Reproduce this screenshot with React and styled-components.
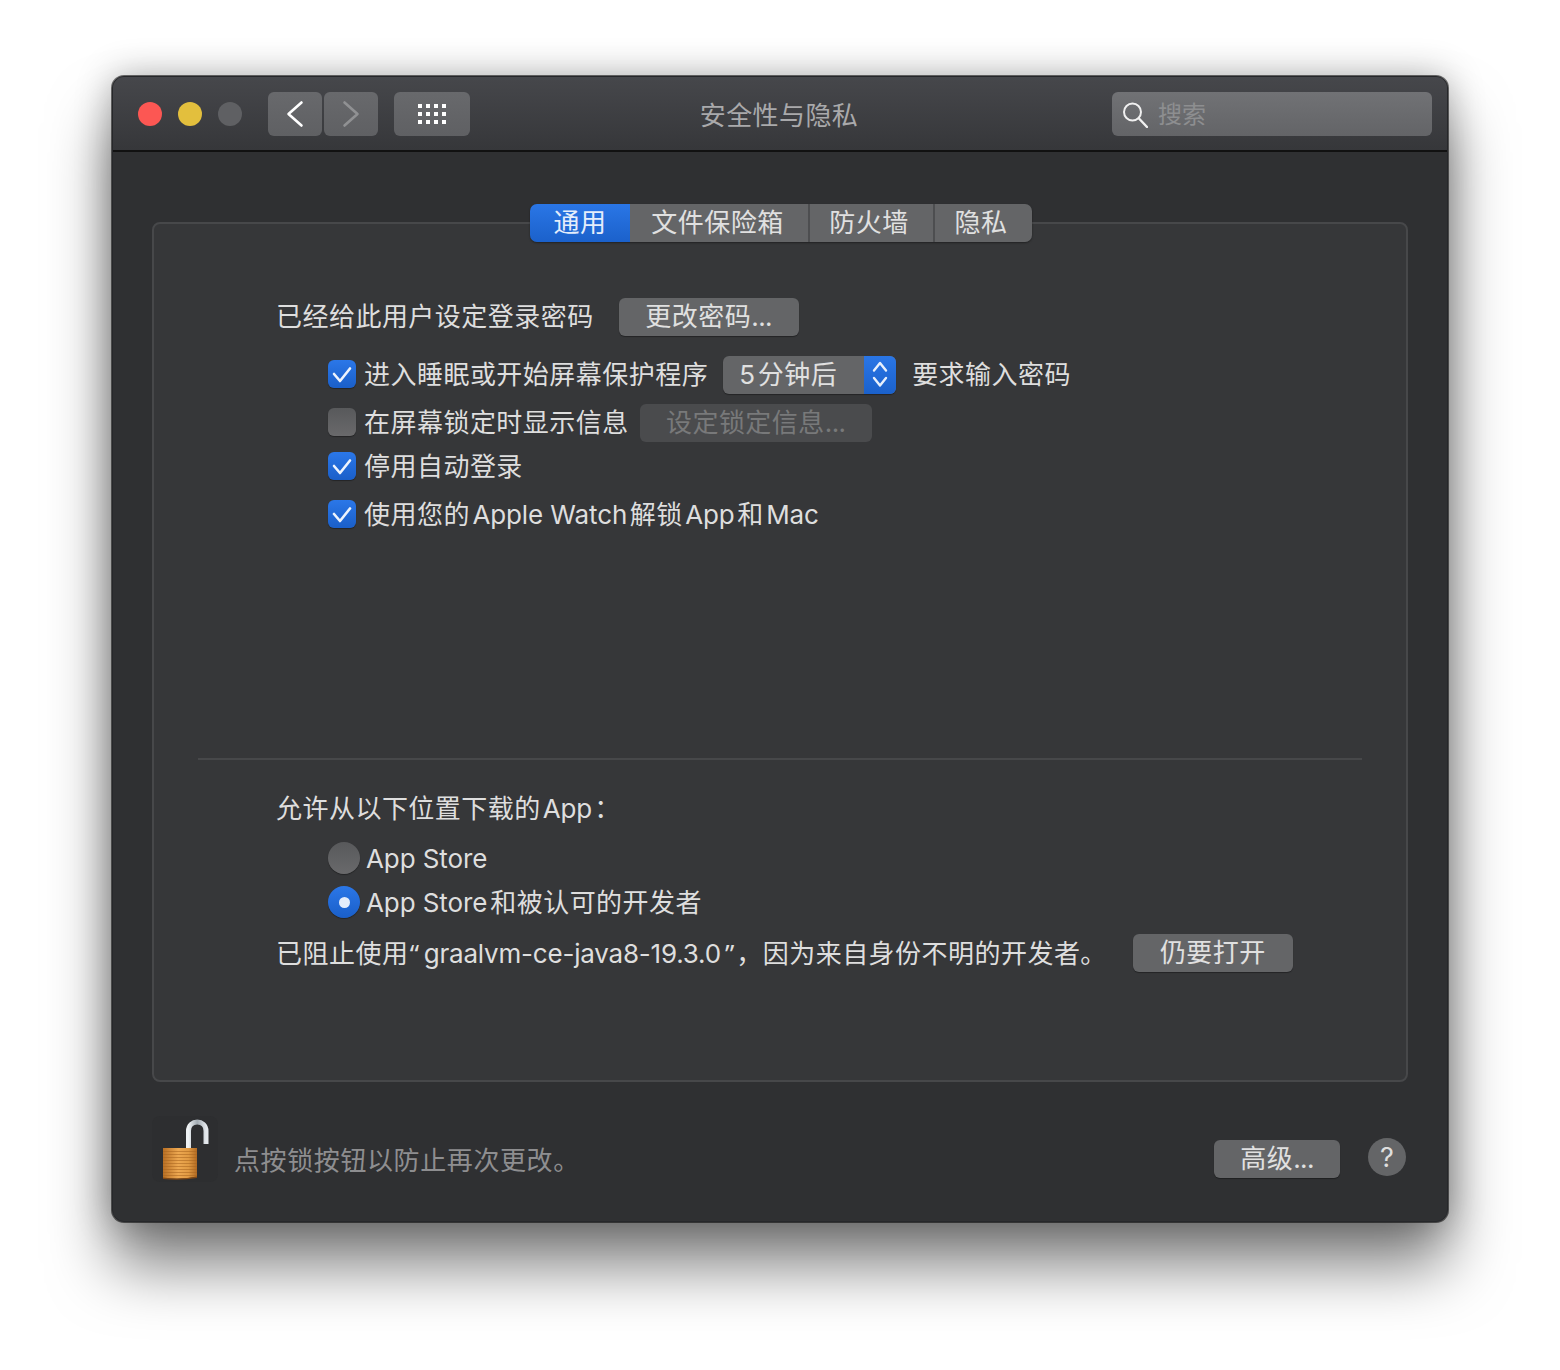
import styled, { createGlobalStyle } from "styled-components";

const GlobalStyle = createGlobalStyle`
  * { box-sizing: border-box; }
  body {
    margin: 0;
    background: #fff;
    font-family: "Inter", "Noto Sans CJK SC", sans-serif;
    font-size: 26px;
    color: #dedede;
  }
`;

const Page = styled.div`
  width: 1560px;
  height: 1370px;
  padding: 76px 112px 0;
  overflow: hidden;
`;

const Window = styled.div`
  width: 1336px;
  height: 1146px;
  border: 1px solid #26272a;
  border-radius: 12px;
  background: #2f3032;
  box-shadow: 0 0 0 1px rgba(0, 0, 0, 0.55), 0 44px 62px rgba(0, 0, 0, 0.5), 0 0 36px rgba(0, 0, 0, 0.3);
  overflow: hidden;
`;

const TitleBar = styled.div`
  display: grid;
  grid-template-columns: 1fr auto 1fr;
  align-items: center;
  height: 75px;
  padding: 0 15px;
  background: linear-gradient(#46474b, #36373a);
  border-bottom: 2px solid #111;
`;

const TitleLeft = styled.div`
  display: flex;
  align-items: center;
  padding-left: 10px;
`;

const Light = styled.span`
  width: 24px;
  height: 24px;
  border-radius: 50%;
  margin-right: 16px;
  background: ${(props) => props.$color};
`;

const NavButton = styled.div`
  display: flex;
  align-items: center;
  justify-content: center;
  width: ${(props) => props.$width}px;
  height: 44px;
  margin-left: ${(props) => props.$left}px;
  border-radius: 6px;
  background: linear-gradient(#68696c, #5f6063);
`;

const Title = styled.div`
  padding-right: 2px;
  color: #a9a9ab;
  letter-spacing: 0.4px;
`;

const SearchBox = styled.div`
  display: flex;
  align-items: center;
  justify-self: end;
  width: 320px;
  height: 44px;
  padding-left: 10px;
  gap: 10px;
  border-radius: 6px;
  background: linear-gradient(#717275, #636467);
  color: #8d8e90;
  font-size: 24px;
`;

const SearchText = styled.span`
  padding-bottom: 3px;
`;

const Content = styled.div`
  padding: 70px 39px 0;
`;

const Panel = styled.div`
  height: 860px;
  border: 2px solid #47484a;
  border-radius: 8px;
  background: #363739;
`;

const Tabs = styled.div`
  display: flex;
  width: 502px;
  height: 38px;
  margin: -20px 0 0 376px;
  border-radius: 7px;
  overflow: hidden;
  box-shadow: 0 1px 2px rgba(0, 0, 0, 0.4);
`;

const Tab = styled.div`
  display: flex;
  align-items: center;
  justify-content: center;
  width: ${(props) => props.$width}px;
  padding: 0 ${(props) => (props.$active ? 0 : 3)}px 5px 0;
  background: ${(props) =>
    props.$active ? "linear-gradient(#2a76e6, #1b61cb)" : "#646567"};
  color: ${(props) => (props.$active ? "#e4edfb" : "#e0e0e0")};
  box-shadow: ${(props) => (props.$divider ? "inset 2px 0 0 #4d4e50" : "none")};
  letter-spacing: 0.47px;
`;

const Row = styled.div`
  display: flex;
  align-items: center;
  height: 38px;
  margin-top: ${(props) => props.$top}px;
  margin-left: ${(props) => (props.$indent ? 174 : 122)}px;
  line-height: 30px;
  letter-spacing: 0.47px;
`;

// latin runs sit tighter than the cjk text around them
const Latin = styled.span`
  margin: 0 ${(props) => props.$gap ?? 2.5}px;
  letter-spacing: ${(props) => props.$track ?? -0.1}px;
`;

const Quote = styled.span`
  font-family: "Noto Sans", sans-serif;
  margin: 0 1.5px;
`;

const Dots = styled.span`
  letter-spacing: -0.6px;
`;

const Box = styled.span`
  display: flex;
  align-items: center;
  justify-content: center;
  width: 28px;
  height: 28px;
  margin: 0 8px 2px 0;
  border-radius: 6px;
  background: ${(props) =>
    props.$checked ? "linear-gradient(#2b77e8, #1a5fc9)" : "linear-gradient(#58595b, #69696b)"};
  box-shadow: 0 1px 1px rgba(0, 0, 0, 0.35);
`;

const Radio = styled.span`
  display: flex;
  align-items: center;
  justify-content: center;
  width: 32px;
  height: 32px;
  margin: 0 6px 2px 0;
  border-radius: 50%;
  background: ${(props) =>
    props.$checked ? "linear-gradient(#2b77e8, #1a5fc9)" : "linear-gradient(#58595b, #69696b)"};
  box-shadow: 0 1px 1px rgba(0, 0, 0, 0.35);
`;

const RadioDot = styled.span`
  width: 11px;
  height: 11px;
  border-radius: 50%;
  background: #e4edfb;
`;

const Button = styled.div`
  display: flex;
  align-items: center;
  justify-content: center;
  width: ${(props) => props.$width}px;
  height: 38px;
  margin-left: ${(props) => props.$left || 0}px;
  border-radius: 6px;
  background: ${(props) => (props.$disabled ? "#4a4b4d" : "#646567")};
  color: ${(props) => (props.$disabled ? "#78797a" : "#e0e0e0")};
  box-shadow: ${(props) => (props.$disabled ? "none" : "0 1px 1px rgba(0, 0, 0, 0.35)")};
  line-height: 30px;
  letter-spacing: 0.47px;
`;

const Select = styled.div`
  display: flex;
  width: 173px;
  height: 38px;
  margin: 0 16px 0 15px;
  border-radius: 6px;
  overflow: hidden;
  background: #646567;
  box-shadow: 0 1px 1px rgba(0, 0, 0, 0.35);
`;

const SelectValue = styled.div`
  flex: 1;
  display: flex;
  align-items: center;
  padding-left: 13px;
  color: #e0e0e0;
`;

const SelectArrows = styled.div`
  display: flex;
  align-items: center;
  justify-content: center;
  width: 32px;
  background: linear-gradient(#2a76e6, #1b61cb);
`;

const Divider = styled.div`
  height: 2px;
  margin: 224px 44px 0;
  background: #47484a;
`;

const Footer = styled.div`
  display: flex;
  align-items: flex-start;
  padding: 34px 2px 0 0;
`;

const LockBox = styled.div`
  width: 66px;
  height: 66px;
  border-radius: 8px;
  background: #2d2e30;
`;

const Note = styled.div`
  margin: 24px 0 0 16px;
  color: #8e8e90;
  letter-spacing: 0.6px;
`;

const FooterRight = styled.div`
  display: flex;
  align-items: flex-start;
  margin-left: auto;
  padding-top: 24px;
`;

const Help = styled.div`
  display: flex;
  align-items: center;
  justify-content: center;
  width: 38px;
  height: 38px;
  margin: -2px 0 0 28px;
  border-radius: 50%;
  background: #646567;
  color: #dedede;
  font-size: 27px;
`;

const Tick = () => (
  <svg width="20" height="17" viewBox="0 0 20 17" fill="none">
    <path d="M2 8 L8 15 L18 2.5" stroke="#eef4fd" strokeWidth="2.6" strokeLinecap="round" strokeLinejoin="round" />
  </svg>
);

const Lock = () => (
  <svg width="66" height="66" viewBox="0 0 66 66">
    <defs>
      <linearGradient id="metal" x1="0" x2="1" y1="0" y2="0">
        <stop offset="0" stopColor="#eef2f4" />
        <stop offset="0.5" stopColor="#a2abb2" />
        <stop offset="1" stopColor="#e4e8ec" />
      </linearGradient>
      <linearGradient id="brass" x1="0" x2="1" y1="0" y2="0">
        <stop offset="0" stopColor="#b86f24" />
        <stop offset="0.45" stopColor="#eda851" />
        <stop offset="0.75" stopColor="#e09a43" />
        <stop offset="1" stopColor="#b26a22" />
      </linearGradient>
    </defs>
    <path d="M36.5 32 V15 C36.5 3 54 3 54 15 V28" fill="none" stroke="url(#metal)" strokeWidth="5" />
    <path d="M11 32 H45 V61 Q28 64 11 62 Z" fill="url(#brass)" />
    {[35, 38, 41, 44, 47, 50, 53, 56, 59].map((y) => (
      <rect key={y} x="11" y={y} width="34" height="1" fill="#a8641f" opacity="0.55" />
    ))}
    <path d="M11 61.5 Q28 64 45 60.5 V62 Q28 65 11 63 Z" fill="#7d4715" />
  </svg>
);

export default function App() {
  return (
    <>
      <GlobalStyle />
      <Page>
        <Window>
          <TitleBar>
            <TitleLeft>
              <Light $color="#fc5753" />
              <Light $color="#e3bf3d" />
              <Light $color="#5f6063" />
              <NavButton $width={54} $left={10}>
                <svg width="18" height="28" viewBox="0 0 18 28" fill="none">
                  <path d="M15.5 2.5 L2.5 14 L15.5 25.5" stroke="#fff" strokeWidth="2.6" strokeLinecap="round" strokeLinejoin="round" />
                </svg>
              </NavButton>
              <NavButton $width={54} $left={2}>
                <svg width="18" height="28" viewBox="0 0 18 28" fill="none">
                  <path d="M2.5 2.5 L15.5 14 L2.5 25.5" stroke="#909193" strokeWidth="2.6" strokeLinecap="round" strokeLinejoin="round" />
                </svg>
              </NavButton>
              <NavButton $width={76} $left={16}>
                <svg width="30" height="22" viewBox="0 0 30 22" fill="#fff">
                  {[1, 9, 17].map((y) =>
                    [1, 9, 17, 25].map((x) => (
                      <rect key={`${x}-${y}`} x={x} y={y} width="4" height="4" />
                    ))
                  )}
                </svg>
              </NavButton>
            </TitleLeft>
            <Title>安全性与隐私</Title>
            <SearchBox>
              <svg width="26" height="28" viewBox="0 0 26 28" fill="none">
                <circle cx="10.5" cy="12" r="8.5" stroke="#f0f0f0" strokeWidth="2" />
                <path d="M17 18.5 L25 27" stroke="#f0f0f0" strokeWidth="2.4" strokeLinecap="round" />
              </svg>
              <SearchText>搜索</SearchText>
            </SearchBox>
          </TitleBar>
          <Content>
            <Panel>
              <Tabs>
                <Tab $width={100} $active>通用</Tab>
                <Tab $width={178}>文件保险箱</Tab>
                <Tab $width={125} $divider>防火墙</Tab>
                <Tab $width={99} $divider>隐私</Tab>
              </Tabs>

              <Row $top={56}>
                已经给此用户设定登录密码
                <Button $width={180} $left={25}>更改密码<Dots>...</Dots></Button>
              </Row>
              <Row $top={20} $indent>
                <Box $checked><Tick /></Box>
                进入睡眠或开始屏幕保护程序
                <Select>
                  <SelectValue>
                    <span><Latin $gap={3}>5</Latin>分钟后</span>
                  </SelectValue>
                  <SelectArrows>
                    <svg width="18" height="30" viewBox="0 0 18 30" fill="none">
                      <path d="M3 10.5 L9 3 L15 10.5 M3 18 L9 25.5 L15 18" stroke="#e8f0fc" strokeWidth="2.4" strokeLinecap="round" strokeLinejoin="round" />
                    </svg>
                  </SelectArrows>
                </Select>
                要求输入密码
              </Row>
              <Row $top={10} $indent>
                <Box />
                在屏幕锁定时显示信息
                <Button $width={232} $left={11} $disabled>设定锁定信息<Dots>...</Dots></Button>
              </Row>
              <Row $top={6} $indent>
                <Box $checked><Tick /></Box>
                停用自动登录
              </Row>
              <Row $top={10} $indent>
                <Box $checked><Tick /></Box>
                <span>
                  使用您的<Latin>Apple Watch</Latin>解锁<Latin>App</Latin>和<Latin>Mac</Latin>
                </span>
              </Row>

              <Divider />

              <Row $top={30}>
                <span>允许从以下位置下载的<Latin $gap={2}>App</Latin>：</span>
              </Row>
              <Row $top={12} $indent>
                <Radio />
                <Latin $gap={0}>App Store</Latin>
              </Row>
              <Row $top={6} $indent>
                <Radio $checked><RadioDot /></Radio>
                <span><Latin $gap={0}>App Store</Latin><Latin $gap={1.5} />和被认可的开发者</span>
              </Row>
              <Row $top={12}>
                <span>
                  已阻止使用<Quote>“</Quote><Latin $track={-0.2}>graalvm-ce-java8-19.3.0</Latin><Quote>”</Quote>，因为来自身份不明的开发者。
                </span>
                <Button $width={160} $left={26}>仍要打开</Button>
              </Row>
            </Panel>
            <Footer>
              <LockBox><Lock /></LockBox>
              <Note>点按锁按钮以防止再次更改。</Note>
              <FooterRight>
                <Button $width={126}>高级<Dots>...</Dots></Button>
                <Help>?</Help>
              </FooterRight>
            </Footer>
          </Content>
        </Window>
      </Page>
    </>
  );
}
